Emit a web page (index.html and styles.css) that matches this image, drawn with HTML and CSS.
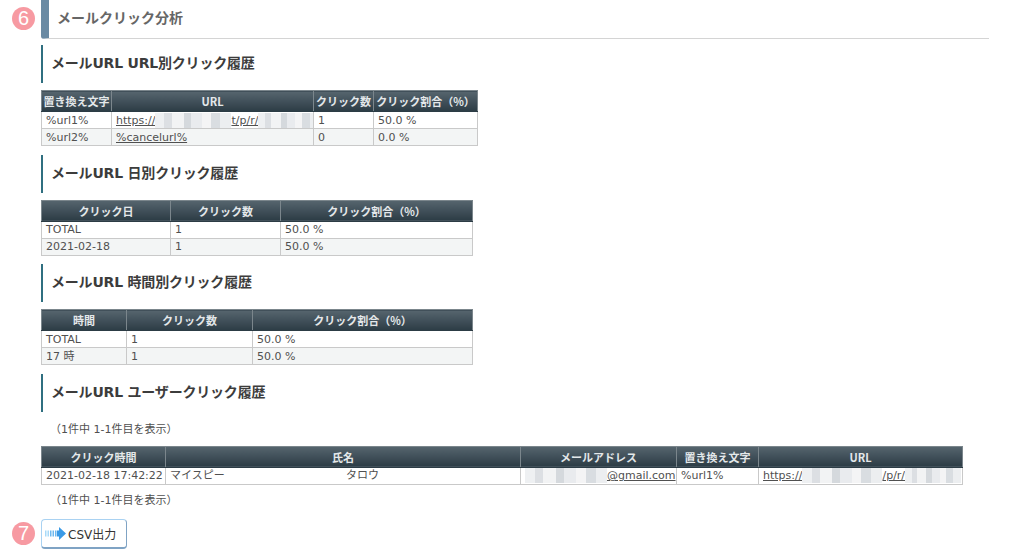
FILE: index.html
```html
<!DOCTYPE html>
<html lang="ja">
<head>
<meta charset="utf-8">
<title>メールクリック分析</title>
<link rel="stylesheet" href="styles.css">
</head>
<body>
<main class="page">
  <span class="badge badge-six">6</span>
  <h2 class="section-title">メールクリック分析</h2>

  <h3 class="sub-title">メールURL URL別クリック履歴</h3>
  <table class="grid grid-url">
    <colgroup><col class="c70"><col class="c202"><col class="c60"><col class="c104"></colgroup>
    <thead><tr><th>置き換え文字</th><th>URL</th><th>クリック数</th><th>クリック割合（%）</th></tr></thead>
    <tbody>
      <tr><td>%url1%</td><td><a href="#">https://<span class="mosaic m-a"></span>t/p/r/<span class="mosaic m-b"></span></a></td><td>1</td><td>50.0 %</td></tr>
      <tr class="alt"><td>%url2%</td><td><a href="#">%cancelurl%</a></td><td>0</td><td>0.0 %</td></tr>
    </tbody>
  </table>

  <h3 class="sub-title">メールURL 日別クリック履歴</h3>
  <table class="grid grid-day">
    <colgroup><col class="c129"><col class="c110"><col class="c192"></colgroup>
    <thead><tr><th>クリック日</th><th>クリック数</th><th>クリック割合（%）</th></tr></thead>
    <tbody>
      <tr><td>TOTAL</td><td>1</td><td>50.0 %</td></tr>
      <tr class="alt"><td>2021-02-18</td><td>1</td><td>50.0 %</td></tr>
    </tbody>
  </table>

  <h3 class="sub-title">メールURL 時間別クリック履歴</h3>
  <table class="grid grid-day">
    <colgroup><col class="c85"><col class="c126"><col class="c220"></colgroup>
    <thead><tr><th>時間</th><th>クリック数</th><th>クリック割合（%）</th></tr></thead>
    <tbody>
      <tr><td>TOTAL</td><td>1</td><td>50.0 %</td></tr>
      <tr class="alt"><td>17 時</td><td>1</td><td>50.0 %</td></tr>
    </tbody>
  </table>

  <h3 class="sub-title">メールURL ユーザークリック履歴</h3>
  <p class="count">（1件中 1-1件目を表示）</p>
  <table class="grid grid-user">
    <colgroup><col class="c124"><col class="c355"><col class="c156"><col class="c82"><col class="c204"></colgroup>
    <thead><tr><th>クリック時間</th><th>氏名</th><th>メールアドレス</th><th>置き換え文字</th><th>URL</th></tr></thead>
    <tbody>
      <tr><td>2021-02-18 17:42:22</td><td><span class="family">マイスピー</span>タロウ</td><td><a href="#"><span class="mosaic m-c"></span>@gmail.com</a></td><td>%url1%</td><td><a href="#">https://<span class="mosaic m-a2"></span>/p/r/<span class="mosaic m-d"></span></a></td></tr>
    </tbody>
  </table>
  <p class="count count-after">（1件中 1-1件目を表示）</p>

  <div class="csv-row">
    <span class="badge badge-seven">7</span>
    <button class="csv" type="button">
      <svg class="csv-icon" width="21" height="13" viewBox="0 0 21 13" aria-hidden="true">
        <path d="M0 3.500h1.500v6H0zM2.500 3.500h1.500v6H2.500z" fill="#a8daf8"/>
        <path d="M5 3.500h1.500v6H5zM7.500 3.500h1.500v6H7.500zM10 3.500h1.500v6H10z" fill="#6db8ef"/>
        <path d="M12 3.500h2V0l7 6.500-7 6.500V9.500h-2z" fill="#3a9ae6"/>
      </svg>CSV出力
    </button>
  </div>
</main>
</body>
</html>
```
FILE: styles.css
```css
* { box-sizing: border-box; }
html, body { margin: 0; background: #fff; }
body {
  font-family: "DejaVu Sans", "Noto Sans CJK JP", sans-serif;
  font-size: 11px;
  color: #505050;
  height: 555px;
  overflow: hidden;
}
.page {
  position: relative;
  width: 989px;
  padding-left: 41px;
}
.badge {
  position: absolute;
  left: 12px;
  width: 23px;
  height: 23px;
  border-radius: 50%;
  background: #f79aa2;
  color: #fff;
  font: 20px/23px "Liberation Sans", sans-serif;
  text-align: center;
}
.badge-six { top: 7px; }
.badge-seven { top: 3px; }
.section-title {
  margin: 0;
  height: 39px;
  padding-left: 8px;
  border-left: 8px solid #6a8aa3;
  border-bottom: 1px solid #d4d4d4;
  border-bottom-left-radius: 3px;
  font: bold 14px/35px "Noto Sans CJK JP", sans-serif;
  color: #666;
}
.sub-title {
  margin: 6px 0 7px;
  height: 38px;
  padding-left: 8px;
  border-left: 2px solid #2f6f80;
  font: bold 14px/37px "DejaVu Sans", "Noto Sans CJK JP", sans-serif;
  color: #3c3c3c;
  letter-spacing: -0.2px;
}
.grid {
  table-layout: fixed;
  border-collapse: collapse;
  margin-bottom: 8.600px;
  border: 1px solid #c9c9c9;
}
.grid-url { width: 436px; }
.grid-day { width: 431px; }
.grid-user { width: 921px; margin-bottom: 0; }
.c70 { width: 70px; }
.c202 { width: 202px; }
.c60 { width: 60px; }
.c104 { width: 104px; }
.c129 { width: 129px; }
.c110 { width: 110px; }
.c192 { width: 192px; }
.c85 { width: 85px; }
.c126 { width: 126px; }
.c220 { width: 220px; }
.c124 { width: 124px; }
.c355 { width: 355px; }
.c156 { width: 156px; }
.c82 { width: 82px; }
.c204 { width: 204px; }
.grid th {
  height: 21px;
  padding: 0;
  background: linear-gradient(#56656e, #2c3c45);
  border: 1px solid #7b868c;
  border-bottom: 1px solid #2c3c45;
  color: #e4e8ea;
  font: bold 11px/18px "Noto Sans CJK JP", sans-serif;
  text-align: center;
  white-space: nowrap;
  overflow: hidden;
}
.grid td {
  height: 17px;
  padding: 0 0 0 4px;
  border: 1px solid #c9c9c9;
  line-height: 15px;
  white-space: nowrap;
  overflow: hidden;
}
.alt td { background: #f3f5f5; }
a { color: #505050; }
.mosaic {
  display: inline-block;
  height: 15px;
  vertical-align: -4px;
  filter: blur(0.7px);
  background-image:
    linear-gradient(90deg, #eef0f2 0 12%, #dcdfe3 12% 22%, #f2f3f4 22% 38%, #d5d9dd 38% 48%, #e9ebee 48% 62%, #f4f4f5 62% 74%, #d9dde1 74% 86%, #eceef0 86%);
}
.m-a { width: 76px; }
.m-a2 { width: 80px; }
.m-b { width: 60px; }
.m-c { width: 82px; }
.m-d { width: 56px; }
.family { display: inline-block; width: 176px; }
.count { margin: 10px 0 0 9px; height: 16px; line-height: 16px; }
.count-after { margin-top: 8px; }
.count + .grid { margin-top: 8px; }
.csv-row { position: relative; margin: 10px 0 0 -41px; padding-left: 41px; }
.csv {
  display: flex;
  align-items: center;
  width: 86px;
  height: 30px;
  padding: 0 0 0 3px;
  background: #fff;
  border: 1px solid #a9d2f2;
  border-right-color: #7fa3c4;
  border-bottom: 2px solid #7fa3c4;
  border-radius: 4px;
  color: #333;
  font: 12px "DejaVu Sans", "Noto Sans CJK JP", sans-serif;
}
.csv-icon { flex: none; margin-right: 2px; }
```
